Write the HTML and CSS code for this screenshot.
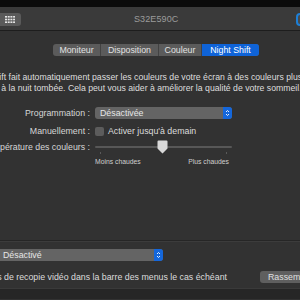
FILE: index.html
```html
<!DOCTYPE html>
<html lang="fr">
<head>
    <meta charset="UTF-8">
    <meta name="viewport" content="width=device-width, initial-scale=1.0">
    <title>S32E590C</title>
    <link rel="stylesheet" href="styles.css">
</head>
<body>
    <div class="window">
        <div class="topbar"></div>

        <div class="titlebar">
            <div class="grid-btn">
                <svg width="10" height="7" viewBox="0 0 10 7">
                    <g fill="#e6e6e6">
                        <rect x="0" y="0" width="2" height="1.6"/><rect x="2.7" y="0" width="2" height="1.6"/><rect x="5.4" y="0" width="2" height="1.6"/><rect x="8.1" y="0" width="1.9" height="1.6"/>
                        <rect x="0" y="2.7" width="2" height="1.6"/><rect x="2.7" y="2.7" width="2" height="1.6"/><rect x="5.4" y="2.7" width="2" height="1.6"/><rect x="8.1" y="2.7" width="1.9" height="1.6"/>
                        <rect x="0" y="5.4" width="2" height="1.6"/><rect x="2.7" y="5.4" width="2" height="1.6"/><rect x="5.4" y="5.4" width="2" height="1.6"/><rect x="8.1" y="5.4" width="1.9" height="1.6"/>
                    </g>
                </svg>
            </div>
            <div class="title">S32E590C</div>
            <div class="search-btn"></div>
        </div>

        <div class="pane">
            <div class="tabs">
                <div class="tab">Moniteur</div>
                <div class="tab">Disposition</div>
                <div class="tab">Couleur</div>
                <div class="tab active">Night Shift</div>
            </div>

            <p class="desc">Night Shift fait automatiquement passer les couleurs de votre écran à des couleurs plus chaudes à la nuit tombée. Cela peut vous aider à améliorer la qualité de votre sommeil.</p>

            <div class="form">
                <div class="row">
                    <div class="label"><span>Programmation :</span></div>
                    <div class="popup">
                        <span>Désactivée</span>
                        <div class="stepper">
                            <svg width="5" height="8" viewBox="0 0 5 8"><path d="M1 3 L2.5 1.5 L4 3 M1 5 L2.5 6.5 L4 5" fill="none" stroke="#fff" stroke-width="0.9"/></svg>
                        </div>
                    </div>
                </div>
                <div class="row row-manual">
                    <div class="label"><span>Manuellement :</span></div>
                    <div class="check-wrap">
                        <div class="checkbox"></div>
                        <span>Activer jusqu'à demain</span>
                    </div>
                </div>
                <div class="row row-temp">
                    <div class="label"><span>Température des couleurs :</span></div>
                    <div class="slider">
                        <div class="track"></div>
                        <div class="thumb">
                            <svg width="11" height="14" viewBox="0 0 11 14"><path d="M1.5 0.5 H9.5 A1 1 0 0 1 10.5 1.5 V8.5 L5.5 13.5 L0.5 8.5 V1.5 A1 1 0 0 1 1.5 0.5 Z" fill="#d9d9d9"/></svg>
                        </div>
                        <div class="tick tick-left"></div>
                        <div class="tick tick-right"></div>
                    </div>
                </div>
                <div class="row row-ends">
                    <div class="label"></div>
                    <div class="ends">
                        <span>Moins chaudes</span>
                        <span>Plus chaudes</span>
                    </div>
                </div>
            </div>
        </div>

        <div class="bottom">
            <div class="popup wide">
                <span>Désactivé</span>
                <div class="stepper">
                    <svg width="5" height="8" viewBox="0 0 5 8"><path d="M1 3 L2.5 1.5 L4 3 M1 5 L2.5 6.5 L4 5" fill="none" stroke="#fff" stroke-width="0.9"/></svg>
                </div>
            </div>
            <div class="mirror-row">
                <div class="mirror-text"><span>Afficher les options de recopie vidéo dans la barre des menus le cas échéant</span></div>
                <div class="button">Rassembler les fenêtres</div>
            </div>
        </div>

        <div class="footer"></div>
    </div>
</body>
</html>
```

FILE: styles.css
```css
body {
    margin: 0;
    background: #323232;
    font-family: 'Liberation Sans', Arial, sans-serif;
    color: #dcdcdc;
}
.window {
    width: 300px;
    height: 300px;
    overflow: hidden;
    background: #323232;
}
.topbar {
    height: 7px;
    background: #0b0b0b;
}
.titlebar {
    height: 23px;
    background: #3a3a3a;
    border-bottom: 1px solid #1d1d1d;
    display: flex;
    align-items: center;
}
.grid-btn {
    width: 21px;
    height: 13px;
    margin-top: 1px;
    background: #5a5a5a;
    border-radius: 0 3px 3px 0;
    display: flex;
    align-items: center;
    justify-content: center;
    padding-right: 2px;
    box-sizing: border-box;
}
.title {
    font-size: 9px;
    color: #9c9c9c;
    margin-left: 113px;
    margin-top: 1px;
    letter-spacing: 0.1px;
}
.search-btn {
    width: 20px;
    height: 13px;
    margin-top: 1px;
    margin-left: auto;
    margin-right: -16px;
    border: 2px solid #1d7fd6;
    border-radius: 4px;
    background: #4a4a4a;
    box-sizing: border-box;
}
.pane {
    padding-top: 13px;
    height: 196px;
    border-bottom: 1px solid #262626;
}
.tabs {
    display: flex;
    margin-left: 53px;
    width: 206px;
    height: 12px;
    border-radius: 3px;
    overflow: hidden;
    background: #5b5b5b;
}
.tab {
    font-size: 8.8px;
    line-height: 12px;
    color: #e2e2e2;
    text-align: center;
    border-right: 1px solid #424242;
}
.tab:nth-child(1) { width: 47px; }
.tab:nth-child(2) { width: 57px; }
.tab:nth-child(3) { width: 42px; }
.tab.active {
    flex: 1;
    border-right: none;
    background: #0f63d7;
    color: #fff;
}
.desc {
    margin: 16px 0 0 -34px;
    width: 360px;
    font-size: 8.7px;
    line-height: 11px;
    color: #dedede;
}
.form {
    margin-top: 13px;
}
.row {
    display: flex;
    align-items: center;
    height: 12px;
}
.row-manual { margin-top: 6px; }
.row-temp { margin-top: 3px; height: 13px; }
.row-ends { margin-top: 3px; height: 10px; }
.label {
    width: 90px;
    flex-shrink: 0;
    margin-right: 5px;
    display: flex;
    justify-content: flex-end;
    font-size: 8.8px;
    color: #d6d6d6;
    white-space: nowrap;
}
.popup {
    width: 137px;
    height: 12px;
    background: #646464;
    border-radius: 3px;
    display: flex;
    align-items: center;
    justify-content: space-between;
    font-size: 8.8px;
    color: #e6e6e6;
}
.popup span {
    padding-left: 5px;
}
.stepper {
    width: 9px;
    height: 12px;
    background: #1467dc;
    border-radius: 0 3px 3px 0;
    display: flex;
    align-items: center;
    justify-content: center;
}
.check-wrap {
    display: flex;
    align-items: center;
    font-size: 8.8px;
    color: #dcdcdc;
}
.checkbox {
    width: 9px;
    height: 9px;
    background: #5c5c5c;
    border-radius: 2px;
    margin-right: 4px;
}
.slider {
    position: relative;
    width: 137px;
    height: 13px;
}
.track {
    margin-top: 6px;
    height: 2px;
    background: #575757;
    border-radius: 1px;
}
.thumb {
    position: absolute;
    left: 62px;
    top: 0;
    line-height: 0;
}
.tick {
    position: absolute;
    top: 12px;
    width: 1px;
    height: 2px;
    background: #5a5a5a;
}
.tick-left { left: 5px; }
.tick-right { left: 131px; }
.ends {
    width: 137px;
    display: flex;
    justify-content: space-between;
    font-size: 6.8px;
    color: #cfcfcf;
    padding-right: 3px;
    box-sizing: border-box;
}
.bottom {
    border-top: 1px solid #3c3c3c;
    height: 47px;
    padding-top: 7px;
    box-sizing: border-box;
}
.popup.wide {
    width: 163px;
    border-radius: 0 3px 3px 0;
}
.popup.wide span {
    padding-left: 3px;
}
.mirror-row {
    display: flex;
    align-items: center;
    margin-top: 10px;
    height: 12px;
}
.mirror-text {
    width: 227px;
    flex-shrink: 0;
    display: flex;
    justify-content: flex-end;
    font-size: 8.8px;
    color: #dcdcdc;
    white-space: nowrap;
}
.button {
    width: 70px;
    flex-shrink: 0;
    height: 12px;
    margin-left: 33px;
    background: #5f5f5f;
    border-radius: 3px;
    font-size: 8.8px;
    line-height: 12px;
    padding-left: 8px;
    white-space: nowrap;
    overflow: hidden;
    color: #e0e0e0;
}
.footer {
    border-top: 1px solid #3a3a3a;
    height: 10px;
    background: #262626;
}
```
